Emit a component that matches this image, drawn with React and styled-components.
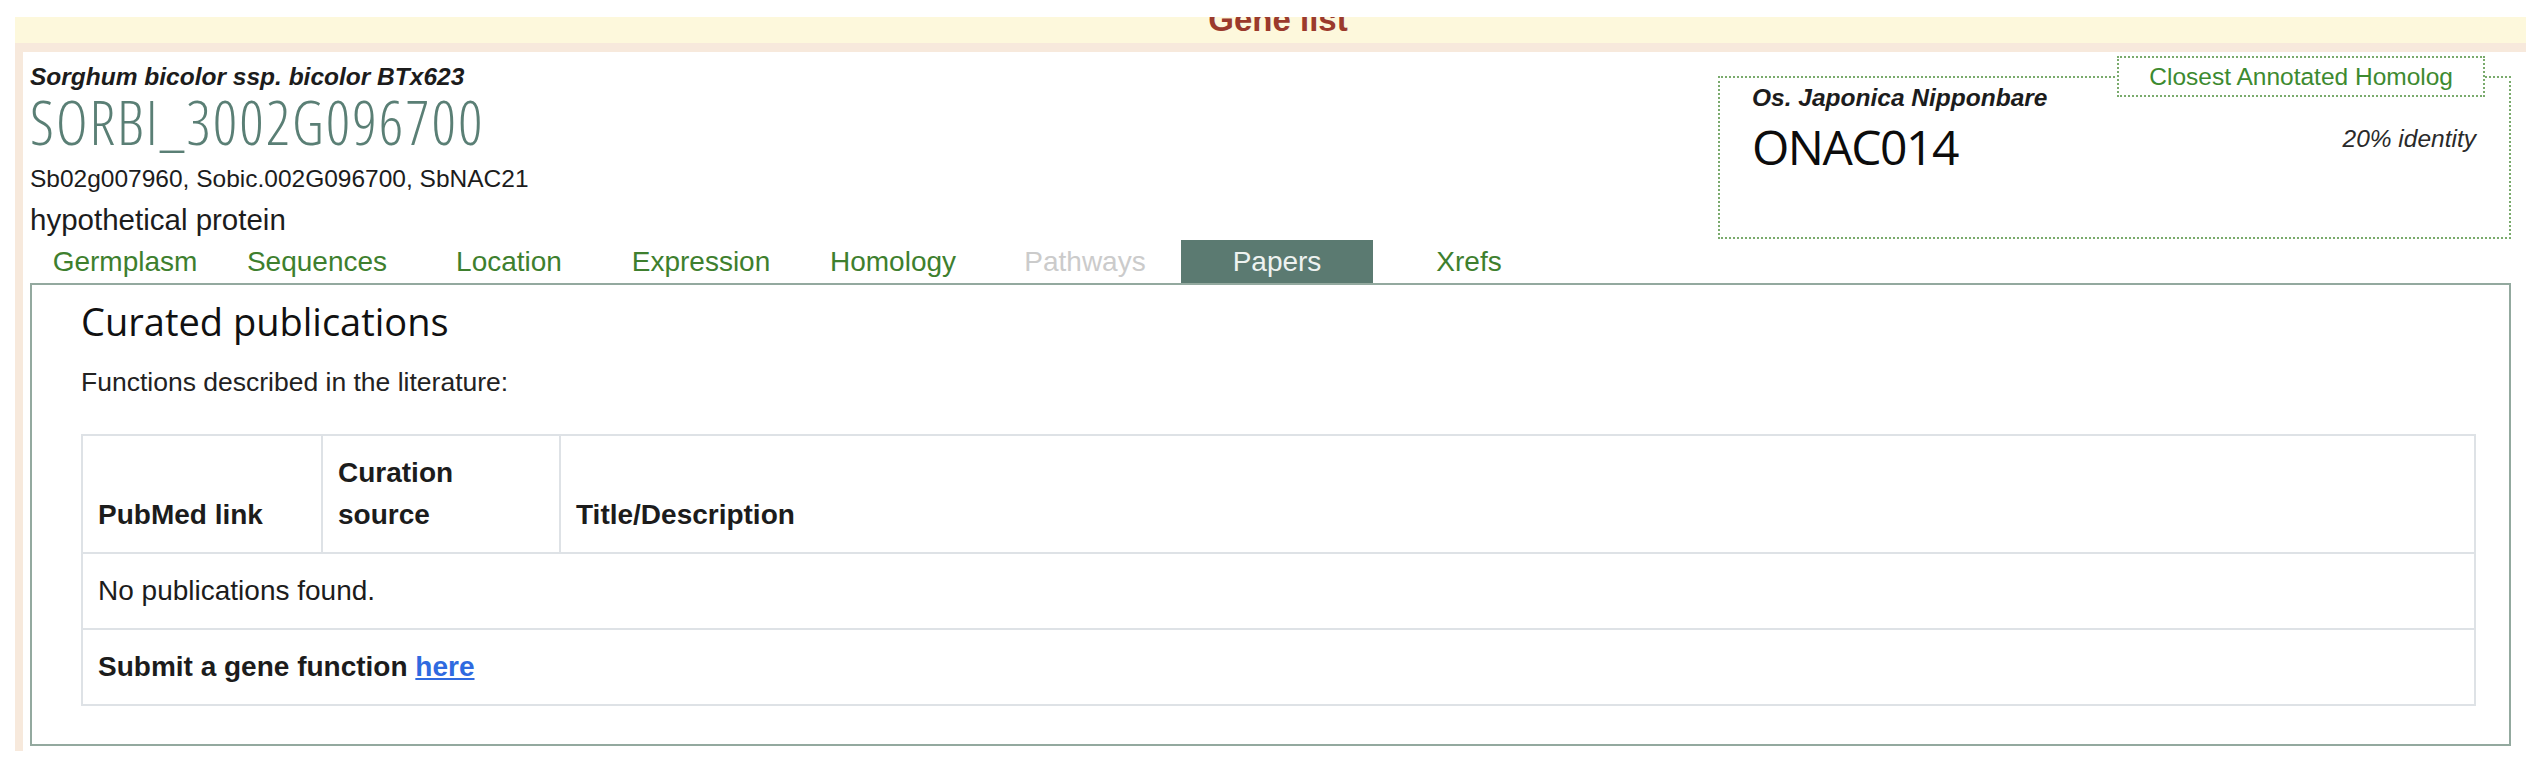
import React from 'react'
import styled, { createGlobalStyle } from 'styled-components'

const GlobalStyle = createGlobalStyle`
  html, body {
    margin: 0;
    padding: 0;
    background: #ffffff;
  }
  body {
    font-family: "Liberation Sans", Arial, sans-serif;
    font-size: 28px;
    color: #1c1c1c;
  }
`;

const Frame = styled.div`
  margin: 17px 0 0 15px;
  background: #f7e9dc;
`;

const HeaderBar = styled.div`
  height: 26px;
  overflow: hidden;
  background: #fdf8dc;
  text-align: center;
  padding-left: 15px;
`;

const HeaderTitle = styled.h1`
  margin: -10px 0 0 0;
  font-size: 33px;
  line-height: 26px;
  font-weight: 700;
  color: #9b3a2c;
`;

const Sheet = styled.div`
  padding: 9px 0 0 8px;
`;

const Body = styled.div`
  background: #ffffff;
  padding: 0 15px 5px 7px;
`;

const Top = styled.div`
  display: flex;
  justify-content: space-between;
  align-items: flex-start;
`;

const GeneInfo = styled.div`
  padding-top: 10px;
`;

const Species = styled.div`
  font-size: 24.5px;
  line-height: 30px;
  font-weight: 700;
  font-style: italic;
`;

const GeneName = styled.div`
  font-family: "Open Sans", sans-serif;
  font-weight: 350;
  font-size: 60px;
  font-stretch: 80%;
  letter-spacing: 2px;
  line-height: 56px;
  color: #5a7f75;
  margin: 2px 0 14px;
`;

const Synonyms = styled.div`
  font-size: 24.5px;
  line-height: 30px;
`;

const Description = styled.div`
  font-size: 29.5px;
  line-height: 36px;
  margin-top: 8px;
`;

const Homolog = styled.fieldset`
  margin: 4px 0 0 0;
  width: 793px;
  box-sizing: border-box;
  height: 183px;
  padding: 0 24px 0 32px;
  border: 2px dotted #7aab6d;
  min-width: 0;
`;

const HomologLegend = styled.legend`
  margin-left: auto;
  padding: 0 30px;
  height: 41px;
  box-sizing: border-box;
  border: 2px dotted #7aab6d;
  font-size: 24.5px;
  line-height: 37px;
  color: #3d8a30;
`;

const HomologSpecies = styled.div`
  font-size: 24.5px;
  line-height: 30px;
  font-weight: 700;
  font-style: italic;
  margin-top: -14px;
`;

const HomologRow = styled.div`
  display: flex;
  justify-content: space-between;
  align-items: flex-start;
`;

const HomologName = styled.div`
  font-family: "Open Sans", sans-serif;
  font-size: 48px;
  letter-spacing: -1.5px;
  line-height: 60px;
  color: #0c0c0c;
  margin-top: 4px;
`;

const Identity = styled.div`
  font-size: 24.5px;
  font-style: italic;
  line-height: 30px;
  margin: 11px 9px 0 0;
  color: #2a2a2a;
`;

const Tabs = styled.nav`
  display: flex;
  margin: 1px 0 0 -1px;
`;

const Tab = styled.div`
  width: 192px;
  height: 43px;
  line-height: 43px;
  text-align: center;
  font-size: 28px;
  color: ${p => (p.$active ? '#eef2f0' : p.$disabled ? '#cbcbcb' : '#3e7f2e')};
  background: ${p => (p.$active ? '#5b7a71' : 'transparent')};
`;

const Panel = styled.section`
  border: 2px solid #93a99f;
  padding: 13px 33px 38px 49px;
`;

const PanelTitle = styled.h2`
  margin: 0;
  font-family: "Open Sans", sans-serif;
  font-weight: 400;
  font-size: 38px;
  line-height: 46px;
  color: #111;
`;

const Intro = styled.p`
  margin: 20px 0 34px;
  font-size: 26.5px;
  line-height: 36px;
  color: #222;
`;

const Table = styled.table`
  width: 100%;
  border-collapse: collapse;
  border: 2px solid #dee2e6;
  font-size: 28px;
  line-height: 42px;
`;

const Th = styled.th`
  width: ${p => p.$w || 'auto'};
  text-align: left;
  vertical-align: bottom;
  font-weight: 700;
  padding: 16px 15px;
  border: 2px solid #dee2e6;
  box-sizing: border-box;
`;

const Td = styled.td`
  padding: 16px 15px;
  border: 2px solid #dee2e6;
  font-weight: ${p => (p.$bold ? 700 : 400)};
`;

const Link = styled.a`
  color: #2f6ae0;
  text-decoration: underline;
`;

const tabs = [
  { label: 'Germplasm' },
  { label: 'Sequences' },
  { label: 'Location' },
  { label: 'Expression' },
  { label: 'Homology' },
  { label: 'Pathways', disabled: true },
  { label: 'Papers', active: true },
  { label: 'Xrefs' },
];

export default function App() {
  return (
    <>
      <GlobalStyle />
      <Frame>
        <HeaderBar>
          <HeaderTitle>Gene list</HeaderTitle>
        </HeaderBar>
        <Sheet>
          <Body>
            <Top>
              <GeneInfo>
                <Species>Sorghum bicolor ssp. bicolor BTx623</Species>
                <GeneName>SORBI_3002G096700</GeneName>
                <Synonyms>Sb02g007960, Sobic.002G096700, SbNAC21</Synonyms>
                <Description>hypothetical protein</Description>
              </GeneInfo>
              <Homolog>
                <HomologLegend>Closest Annotated Homolog</HomologLegend>
                <HomologSpecies>Os. Japonica Nipponbare</HomologSpecies>
                <HomologRow>
                  <HomologName>ONAC014</HomologName>
                  <Identity>20% identity</Identity>
                </HomologRow>
              </Homolog>
            </Top>
            <Tabs>
              {tabs.map(t => (
                <Tab key={t.label} $active={t.active} $disabled={t.disabled}>
                  {t.label}
                </Tab>
              ))}
            </Tabs>
            <Panel>
              <PanelTitle>Curated publications</PanelTitle>
              <Intro>Functions described in the literature:</Intro>
              <Table>
                <thead>
                  <tr>
                    <Th $w="240px">PubMed link</Th>
                    <Th $w="238px">Curation<br />source</Th>
                    <Th>Title/Description</Th>
                  </tr>
                </thead>
                <tbody>
                  <tr>
                    <Td colSpan={3}>No publications found.</Td>
                  </tr>
                  <tr>
                    <Td colSpan={3} $bold>
                      Submit a gene function <Link href="#">here</Link>
                    </Td>
                  </tr>
                </tbody>
              </Table>
            </Panel>
          </Body>
        </Sheet>
      </Frame>
    </>
  )
}
